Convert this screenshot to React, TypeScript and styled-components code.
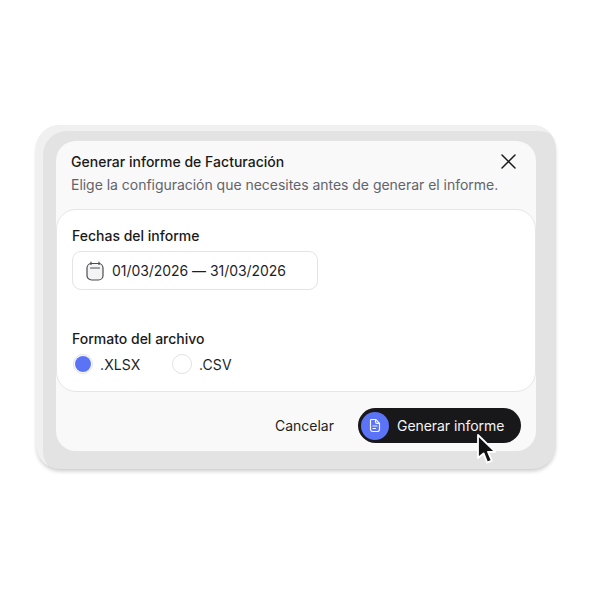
import React from "react";
import styled, { createGlobalStyle } from "styled-components";

const Global = createGlobalStyle`
  html, body { margin: 0; padding: 0; background: #fff; }
  body { font-family: Inter, "Liberation Sans", sans-serif; }
`;
const Page = styled.div`
  width: 592px; height: 592px; box-sizing: border-box; padding: 125px 36px 0; background: #fff;
`;
const Frame = styled.div`
  width: 520px; height: 344px; box-sizing: border-box; padding: 16px 20px 18px;
  border-radius: 24px; background: #e3e3e3;
  box-shadow: inset 7px 6px 0 #f0f0f0, 0 3px 4px -1px rgba(0,0,0,.22);
`;
const Dialog = styled.div`
  height: 310px; border-radius: 20px; background: #f9f9f9; display: flex; flex-direction: column;
`;
const Header = styled.header`
  height: 68px; box-sizing: border-box; padding: 12px 20px 0 15px; position: relative;
`;
const Title = styled.h1`
  margin: 0; font-size: 14px; line-height: 18px; font-weight: 550; color: #1a1a1a; letter-spacing: .02px;
`;
const Subtitle = styled.p`
  margin: 5px 0 0; font-size: 14px; line-height: 17px; font-weight: 400; color: #62646c; white-space: nowrap; letter-spacing: -.03px;
`;
const Close = styled.button`
  position: absolute; top: 12px; right: 19px; width: 17px; height: 17px; padding: 0; border: 0; background: none; display: block;
`;
const Body = styled.section`
  height: 183px; box-sizing: border-box; padding: 17px 15px 0; background: #fff;
  border: 1px solid #e6e6e6; border-radius: 20px;
`;
const Label = styled.div`
  font-size: 14px; line-height: 18px; font-weight: 550; color: #1a1a1a;
`;
const DateField = styled.div`
  width: 246px; height: 39px; box-sizing: border-box; margin-top: 6px; padding-left: 13px;
  border: 1px solid #e4e4e4; border-radius: 9px; display: flex; align-items: center; gap: 8px;
  font-size: 14px; color: #1f1f1f; letter-spacing: -.05px;
`;
const FormatLabel = styled(Label)`
  margin-top: 40px;
`;
const Options = styled.div`
  display: flex; margin-top: 5px; height: 22px; padding-left: 1px; align-items: center;
`;
const Option = styled.div<{ $w: number }>`
  width: ${p => p.$w}px; display: flex; align-items: center; gap: 7px; font-size: 14px; color: #1f1f1f; letter-spacing: .1px;
`;
const Radio = styled.span<{ $on?: boolean }>`
  width: 20px; height: 20px; box-sizing: border-box; border-radius: 50%; border: 1px solid #e2e2e2; background: #fff;
  display: flex; align-items: center; justify-content: center;
  &::after { content: ""; width: 16px; height: 16px; border-radius: 50%; background: ${p => p.$on ? "#5b73f5" : "transparent"}; }
`;
const Footer = styled.footer`
  flex: 1; display: flex; align-items: flex-start; justify-content: flex-end; padding: 16px 15px 0 0; gap: 24px; position: relative;
`;
const Cancel = styled.button`
  border: 0; background: none; padding: 0; height: 35px; font: 400 14px Inter, sans-serif; color: #1f1f1f;
`;
const Primary = styled.button`
  width: 163px; height: 35px; box-sizing: border-box; padding: 0 0 0 3px; border: 0; border-radius: 18px; background: #18181a;
  display: flex; align-items: center; gap: 8px; font: 400 14px Inter, sans-serif; color: #f4f4f4; letter-spacing: -.05px;
`;
const IconDot = styled.span`
  width: 28px; height: 28px; border-radius: 50%; background: #5b73f5; display: flex; align-items: center; justify-content: center;
`;
const Pointer = styled.svg`
  position: absolute; left: 420px; top: 41px;
`;

export default function App() {
  return (
    <Page>
      <Global />
      <Frame>
        <Dialog>
          <Header>
            <Title>Generar informe de Facturación</Title>
            <Subtitle>Elige la configuración que necesites antes de generar el informe.</Subtitle>
            <Close aria-label="Cerrar">
              <svg width="17" height="17" viewBox="0 0 17 17" fill="none" stroke="#1a1a1a" strokeWidth="1.5" strokeLinecap="round">
                <path d="M2 2l13 13M15 2L2 15" />
              </svg>
            </Close>
          </Header>
          <Body>
            <Label>Fechas del informe</Label>
            <DateField>
              <svg width="18" height="20" viewBox="0 0 18 20" fill="none" stroke="#4b4d52" strokeWidth="1.2" strokeLinecap="round">
                <rect x="1" y="2.5" width="16" height="16.5" rx="4.5" fill="#f4f4f4" />
                <path d="M5 1v2.5M13 1v2.5M4.5 7h9" />
              </svg>
              01/03/2026 — 31/03/2026
            </DateField>
            <FormatLabel>Formato del archivo</FormatLabel>
            <Options>
              <Option $w={99}><Radio $on />.XLSX</Option>
              <Option $w={80}><Radio />.CSV</Option>
            </Options>
          </Body>
          <Footer>
            <Cancel>Cancelar</Cancel>
            <Primary>
              <IconDot>
                <svg width="14" height="15" viewBox="0 0 14 15" fill="none" stroke="#f4f6ff" strokeWidth="1.2" strokeLinecap="round" strokeLinejoin="round">
                  <path d="M3.5 1.5h4.2L11.5 5.3v6a2.2 2.2 0 0 1-2.2 2.2H4.7a2.2 2.2 0 0 1-2.2-2.2V2.5a1 1 0 0 1 1-1z" />
                  <path d="M7.5 1.7v2.2a1.4 1.4 0 0 0 1.4 1.4h2.4M5 8h4M5 10.5h2.5" />
                </svg>
              </IconDot>
              Generar informe
            </Primary>
            <Pointer width="20" height="32" viewBox="0 0 20 32">
              <path d="M2 2v23l5.6-4.6 3.6 9.2 4.6-2-3.8-8.8h7.3z" fill="#111" stroke="#fff" strokeWidth="1.8" strokeLinejoin="round" />
            </Pointer>
          </Footer>
        </Dialog>
      </Frame>
    </Page>
  );
}
